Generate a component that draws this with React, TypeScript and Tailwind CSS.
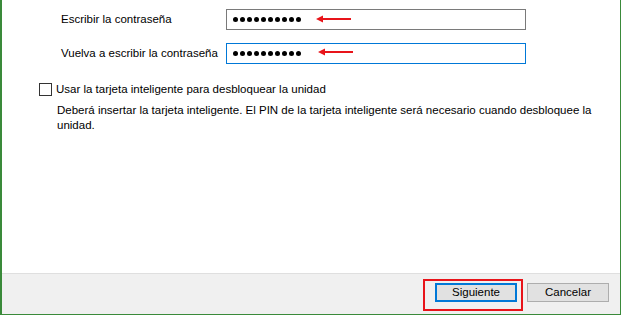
import React from 'react';

const RedArrow = ({ className }: { className: string }) => (
  <svg className={className} width="36" height="8" viewBox="0 0 36 8">
    <line x1="5" y1="4" x2="35" y2="4" stroke="#e8141a" strokeWidth="2" />
    <path d="M0 4 L7 0.5 L7 7.5 Z" fill="#e8141a" />
  </svg>
);

const Dots = () => (
  <div className="flex gap-[2px]">
    {Array.from({ length: 10 }).map((_, i) => (
      <span key={i} className="w-[5px] h-[5px] rounded-full bg-black" />
    ))}
  </div>
);

const App = () => {
  return (
    <div
      className="w-[622px] h-[316px] bg-white text-black text-[11.5px] leading-[15px]"
      style={{ fontFamily: '"Liberation Sans", Arial, sans-serif' }}
    >
      <div className="w-[621px] h-[315px] flex flex-col border-l-2 border-r border-b border-[#3a8a3a]">
        <div className="relative flex-1 flex flex-col">
          {/* password rows */}
          <div className="flex items-center pl-[59px] mt-[9px] h-[21px]">
            <span className="w-[165px]">Escribir la contraseña</span>
            <div className="w-[300px] h-[21px] border border-[#7a7a7a] flex items-center pl-[6px]">
              <Dots />
            </div>
          </div>
          <div className="flex items-center pl-[59px] mt-[13px] h-[21px]">
            <span className="w-[165px]">Vuelva a escribir la contraseña</span>
            <div className="w-[300px] h-[21px] border border-[#0078d7] flex items-center pl-[6px]">
              <Dots />
            </div>
          </div>

          {/* smart card option */}
          <div className="flex items-center pl-[37px] mt-[18px]">
            <span className="w-[13px] h-[13px] border border-[#333] bg-white" />
            <span className="ml-[4px]">Usar la tarjeta inteligente para desbloquear la unidad</span>
          </div>
          <p className="pl-[55px] mt-[6px] whitespace-nowrap">
            Deberá insertar la tarjeta inteligente. El PIN de la tarjeta inteligente será necesario cuando desbloquee la
            <br />
            unidad.
          </p>

          {/* annotation arrows */}
          <RedArrow className="absolute left-[314px] top-[15px]" />
          <RedArrow className="absolute left-[316px] top-[48px]" />
        </div>

        {/* footer */}
        <div className="relative h-[41px] bg-[#f0f0f0] border-t border-[#dfdfdf] flex items-start justify-end pr-[11px] pt-[9px] gap-[10px]">
          <button className="w-[82px] h-[19px] bg-[#e1e1e1] border-2 border-[#0078d7] flex items-center justify-center leading-none">
            Siguiente
          </button>
          <button className="w-[82px] h-[19px] bg-[#e1e1e1] border border-[#adadad] flex items-center justify-center leading-none">
            Cancelar
          </button>
          <div className="absolute left-[421px] top-[5px] w-[100px] h-[32px] border-2 border-[#e8141a]" />
        </div>
      </div>
    </div>
  );
};

export default App;
